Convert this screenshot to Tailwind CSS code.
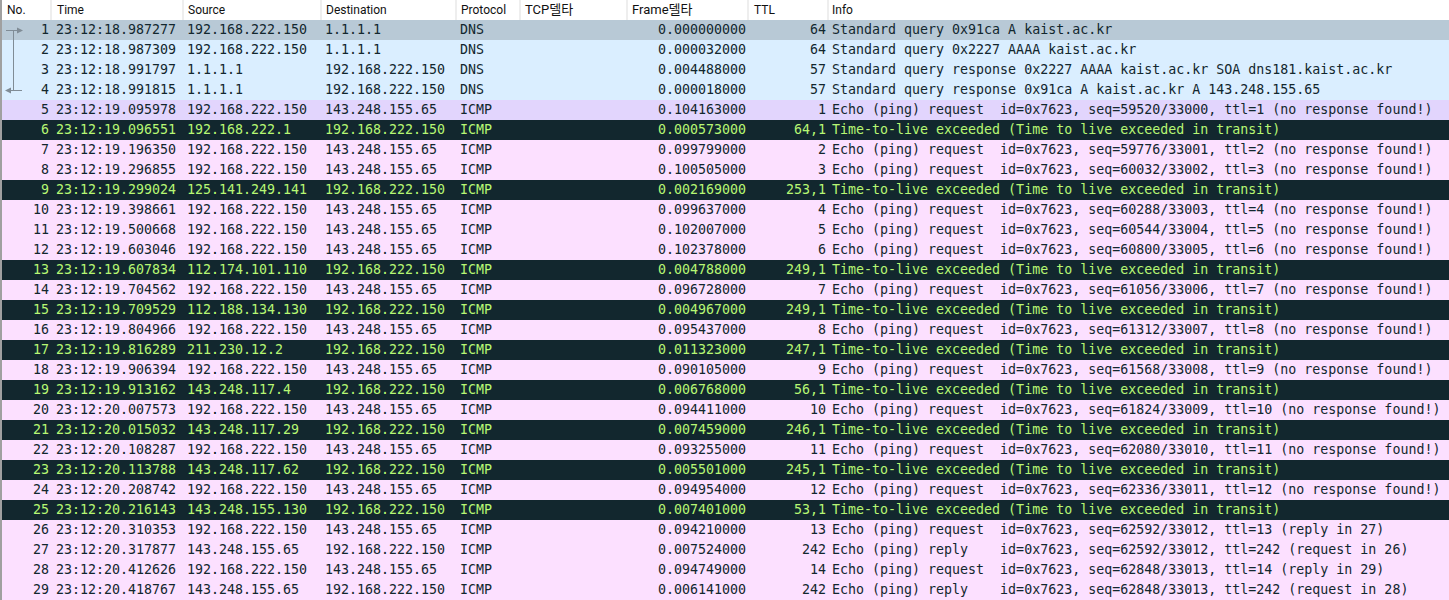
<!DOCTYPE html>
<html><head><meta charset="utf-8"><script src="https://cdn.jsdelivr.net/npm/@tailwindcss/browser@4"></script></head>
<body class="m-0 bg-white overflow-hidden">
<div class="relative w-[1449px] h-[600px] overflow-hidden border-l-2 border-[#a0a0a0]">
<div class="flex h-5 items-center bg-white text-[12px] text-[#111] font-['Roboto','Noto_Sans_CJK_KR',sans-serif] [&>div]:h-5 [&>div]:leading-[20px] [&>div]:border-r-2 [&>div]:border-[#eeeeee] [&>div]:whitespace-nowrap">
<div class="w-[50px] pl-[5px]">No.</div><div class="w-[132px] pl-[5px]">Time</div><div class="w-[138px] pl-[4px]">Source</div><div class="w-[135px] pl-[4px]">Destination</div><div class="w-[64px] pl-[4px]">Protocol</div><div class="w-[107px] pl-[4px] text-[13px]">TCP델타</div><div class="w-[121px] pl-[4px] text-[13px]">Frame델타</div><div class="w-[80px] pl-[5px]">TTL</div><div class="pl-[3px] border-r-0!">Info</div>
</div>
<table class="table-fixed border-collapse w-[1447px] font-['DejaVu_Sans_Mono',monospace] text-[13.31px] [&_tr]:h-5 [&_td]:p-0 [&_td]:whitespace-pre [&_td]:leading-5 [&_td:nth-child(1)]:text-right [&_td:nth-child(1)]:pr-[5px] [&_td:nth-child(2)]:pl-[2px] [&_td:nth-child(3)]:pl-[3px] [&_td:nth-child(4)]:pl-[3px] [&_td:nth-child(5)]:pl-[2px] [&_td:nth-child(6)]:text-right [&_td:nth-child(6)]:pr-[2px] [&_td:nth-child(7)]:text-right [&_td:nth-child(7)]:pr-[2px] [&_td:nth-child(8)]:pl-[4px]">
<colgroup><col class="w-[52px]"><col class="w-[130px]"><col class="w-[138px]"><col class="w-[136px]"><col class="w-[168px]"><col class="w-[122px]"><col class="w-[80px]"><col></colgroup>
<tbody>
<tr class="bg-[#b8c9d6] text-[#12272e]"><td>1</td><td>23:12:18.987277</td><td>192.168.222.150</td><td>1.1.1.1</td><td>DNS</td><td>0.000000000</td><td>64</td><td>Standard query 0x91ca A kaist.ac.kr</td></tr>
<tr class="bg-[#daeeff] text-[#12272e]"><td>2</td><td>23:12:18.987309</td><td>192.168.222.150</td><td>1.1.1.1</td><td>DNS</td><td>0.000032000</td><td>64</td><td>Standard query 0x2227 AAAA kaist.ac.kr</td></tr>
<tr class="bg-[#daeeff] text-[#12272e]"><td>3</td><td>23:12:18.991797</td><td>1.1.1.1</td><td>192.168.222.150</td><td>DNS</td><td>0.004488000</td><td>57</td><td>Standard query response 0x2227 AAAA kaist.ac.kr SOA dns181.kaist.ac.kr</td></tr>
<tr class="bg-[#daeeff] text-[#12272e]"><td>4</td><td>23:12:18.991815</td><td>1.1.1.1</td><td>192.168.222.150</td><td>DNS</td><td>0.000018000</td><td>57</td><td>Standard query response 0x91ca A kaist.ac.kr A 143.248.155.65</td></tr>
<tr class="bg-[#e2d5fd] text-[#12272e]"><td>5</td><td>23:12:19.095978</td><td>192.168.222.150</td><td>143.248.155.65</td><td>ICMP</td><td>0.104163000</td><td>1</td><td>Echo (ping) request  id=0x7623, seq=59520/33000, ttl=1 (no response found!)</td></tr>
<tr class="bg-[#12272e] text-[#b7f774]"><td>6</td><td>23:12:19.096551</td><td>192.168.222.1</td><td>192.168.222.150</td><td>ICMP</td><td>0.000573000</td><td>64,1</td><td>Time-to-live exceeded (Time to live exceeded in transit)</td></tr>
<tr class="bg-[#fce0ff] text-[#12272e]"><td>7</td><td>23:12:19.196350</td><td>192.168.222.150</td><td>143.248.155.65</td><td>ICMP</td><td>0.099799000</td><td>2</td><td>Echo (ping) request  id=0x7623, seq=59776/33001, ttl=2 (no response found!)</td></tr>
<tr class="bg-[#fce0ff] text-[#12272e]"><td>8</td><td>23:12:19.296855</td><td>192.168.222.150</td><td>143.248.155.65</td><td>ICMP</td><td>0.100505000</td><td>3</td><td>Echo (ping) request  id=0x7623, seq=60032/33002, ttl=3 (no response found!)</td></tr>
<tr class="bg-[#12272e] text-[#b7f774]"><td>9</td><td>23:12:19.299024</td><td>125.141.249.141</td><td>192.168.222.150</td><td>ICMP</td><td>0.002169000</td><td>253,1</td><td>Time-to-live exceeded (Time to live exceeded in transit)</td></tr>
<tr class="bg-[#fce0ff] text-[#12272e]"><td>10</td><td>23:12:19.398661</td><td>192.168.222.150</td><td>143.248.155.65</td><td>ICMP</td><td>0.099637000</td><td>4</td><td>Echo (ping) request  id=0x7623, seq=60288/33003, ttl=4 (no response found!)</td></tr>
<tr class="bg-[#fce0ff] text-[#12272e]"><td>11</td><td>23:12:19.500668</td><td>192.168.222.150</td><td>143.248.155.65</td><td>ICMP</td><td>0.102007000</td><td>5</td><td>Echo (ping) request  id=0x7623, seq=60544/33004, ttl=5 (no response found!)</td></tr>
<tr class="bg-[#fce0ff] text-[#12272e]"><td>12</td><td>23:12:19.603046</td><td>192.168.222.150</td><td>143.248.155.65</td><td>ICMP</td><td>0.102378000</td><td>6</td><td>Echo (ping) request  id=0x7623, seq=60800/33005, ttl=6 (no response found!)</td></tr>
<tr class="bg-[#12272e] text-[#b7f774]"><td>13</td><td>23:12:19.607834</td><td>112.174.101.110</td><td>192.168.222.150</td><td>ICMP</td><td>0.004788000</td><td>249,1</td><td>Time-to-live exceeded (Time to live exceeded in transit)</td></tr>
<tr class="bg-[#fce0ff] text-[#12272e]"><td>14</td><td>23:12:19.704562</td><td>192.168.222.150</td><td>143.248.155.65</td><td>ICMP</td><td>0.096728000</td><td>7</td><td>Echo (ping) request  id=0x7623, seq=61056/33006, ttl=7 (no response found!)</td></tr>
<tr class="bg-[#12272e] text-[#b7f774]"><td>15</td><td>23:12:19.709529</td><td>112.188.134.130</td><td>192.168.222.150</td><td>ICMP</td><td>0.004967000</td><td>249,1</td><td>Time-to-live exceeded (Time to live exceeded in transit)</td></tr>
<tr class="bg-[#fce0ff] text-[#12272e]"><td>16</td><td>23:12:19.804966</td><td>192.168.222.150</td><td>143.248.155.65</td><td>ICMP</td><td>0.095437000</td><td>8</td><td>Echo (ping) request  id=0x7623, seq=61312/33007, ttl=8 (no response found!)</td></tr>
<tr class="bg-[#12272e] text-[#b7f774]"><td>17</td><td>23:12:19.816289</td><td>211.230.12.2</td><td>192.168.222.150</td><td>ICMP</td><td>0.011323000</td><td>247,1</td><td>Time-to-live exceeded (Time to live exceeded in transit)</td></tr>
<tr class="bg-[#fce0ff] text-[#12272e]"><td>18</td><td>23:12:19.906394</td><td>192.168.222.150</td><td>143.248.155.65</td><td>ICMP</td><td>0.090105000</td><td>9</td><td>Echo (ping) request  id=0x7623, seq=61568/33008, ttl=9 (no response found!)</td></tr>
<tr class="bg-[#12272e] text-[#b7f774]"><td>19</td><td>23:12:19.913162</td><td>143.248.117.4</td><td>192.168.222.150</td><td>ICMP</td><td>0.006768000</td><td>56,1</td><td>Time-to-live exceeded (Time to live exceeded in transit)</td></tr>
<tr class="bg-[#fce0ff] text-[#12272e]"><td>20</td><td>23:12:20.007573</td><td>192.168.222.150</td><td>143.248.155.65</td><td>ICMP</td><td>0.094411000</td><td>10</td><td>Echo (ping) request  id=0x7623, seq=61824/33009, ttl=10 (no response found!)</td></tr>
<tr class="bg-[#12272e] text-[#b7f774]"><td>21</td><td>23:12:20.015032</td><td>143.248.117.29</td><td>192.168.222.150</td><td>ICMP</td><td>0.007459000</td><td>246,1</td><td>Time-to-live exceeded (Time to live exceeded in transit)</td></tr>
<tr class="bg-[#fce0ff] text-[#12272e]"><td>22</td><td>23:12:20.108287</td><td>192.168.222.150</td><td>143.248.155.65</td><td>ICMP</td><td>0.093255000</td><td>11</td><td>Echo (ping) request  id=0x7623, seq=62080/33010, ttl=11 (no response found!)</td></tr>
<tr class="bg-[#12272e] text-[#b7f774]"><td>23</td><td>23:12:20.113788</td><td>143.248.117.62</td><td>192.168.222.150</td><td>ICMP</td><td>0.005501000</td><td>245,1</td><td>Time-to-live exceeded (Time to live exceeded in transit)</td></tr>
<tr class="bg-[#fce0ff] text-[#12272e]"><td>24</td><td>23:12:20.208742</td><td>192.168.222.150</td><td>143.248.155.65</td><td>ICMP</td><td>0.094954000</td><td>12</td><td>Echo (ping) request  id=0x7623, seq=62336/33011, ttl=12 (no response found!)</td></tr>
<tr class="bg-[#12272e] text-[#b7f774]"><td>25</td><td>23:12:20.216143</td><td>143.248.155.130</td><td>192.168.222.150</td><td>ICMP</td><td>0.007401000</td><td>53,1</td><td>Time-to-live exceeded (Time to live exceeded in transit)</td></tr>
<tr class="bg-[#fce0ff] text-[#12272e]"><td>26</td><td>23:12:20.310353</td><td>192.168.222.150</td><td>143.248.155.65</td><td>ICMP</td><td>0.094210000</td><td>13</td><td>Echo (ping) request  id=0x7623, seq=62592/33012, ttl=13 (reply in 27)</td></tr>
<tr class="bg-[#fce0ff] text-[#12272e]"><td>27</td><td>23:12:20.317877</td><td>143.248.155.65</td><td>192.168.222.150</td><td>ICMP</td><td>0.007524000</td><td>242</td><td>Echo (ping) reply    id=0x7623, seq=62592/33012, ttl=242 (request in 26)</td></tr>
<tr class="bg-[#fce0ff] text-[#12272e]"><td>28</td><td>23:12:20.412626</td><td>192.168.222.150</td><td>143.248.155.65</td><td>ICMP</td><td>0.094749000</td><td>14</td><td>Echo (ping) request  id=0x7623, seq=62848/33013, ttl=14 (reply in 29)</td></tr>
<tr class="bg-[#fce0ff] text-[#12272e]"><td>29</td><td>23:12:20.418767</td><td>143.248.155.65</td><td>192.168.222.150</td><td>ICMP</td><td>0.006141000</td><td>242</td><td>Echo (ping) reply    id=0x7623, seq=62848/33013, ttl=242 (request in 28)</td></tr>
</tbody></table>
<svg class="absolute left-0 top-0 pointer-events-none" width="30" height="100" fill="none"><path d="M4 30.5H16M11.5 30.5V90.5M8 90.5H20" stroke="#808c96" stroke-width="1"/><path d="M15 27.5L21 30.5L15 33.5Z" fill="#808c96"/><path d="M3 90.5L9 87.5V93.5Z" fill="#808c96"/></svg>
</div>
</body></html>
